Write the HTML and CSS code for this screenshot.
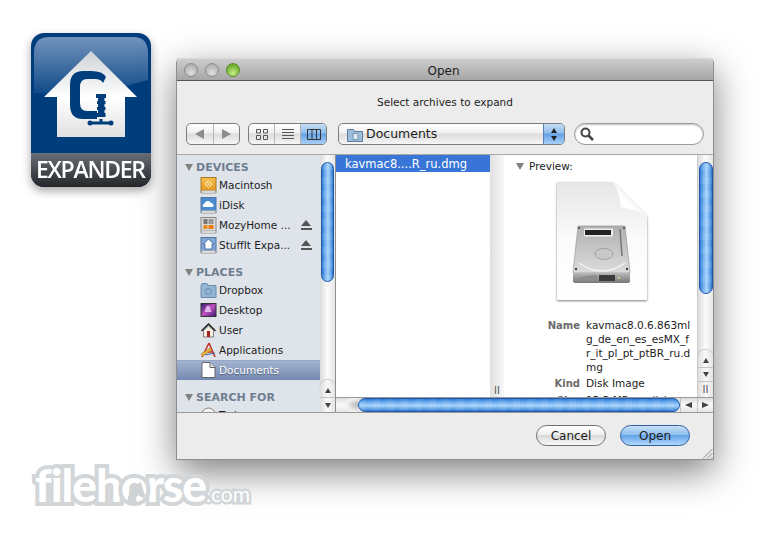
FILE: index.html
```html
<!DOCTYPE html>
<html lang="en">
<head>
    <meta charset="UTF-8">
    <meta name="viewport" content="width=device-width, initial-scale=1.0">
    <title>StuffIt Expander</title>
    <link rel="stylesheet" href="styles.css">
</head>
<body>
    <div class="desktop">
        <svg class="app-icon" width="120" height="154" viewBox="0 0 120 154">
            <defs>
                <linearGradient id="gloss" x1="0" y1="0" x2="0" y2="1">
                    <stop offset="0" stop-color="#7393bd"/>
                    <stop offset="1" stop-color="#0f4a88"/>
                </linearGradient>
                <linearGradient id="band" x1="0" y1="0" x2="0" y2="1">
                    <stop offset="0" stop-color="#6a7078"/>
                    <stop offset="1" stop-color="#24262a"/>
                </linearGradient>
                <linearGradient id="house" x1="0" y1="0" x2="0" y2="1">
                    <stop offset="0" stop-color="#cfd2d6"/>
                    <stop offset="0.55" stop-color="#ffffff"/>
                    <stop offset="1" stop-color="#e0e0e0"/>
                </linearGradient>
                <clipPath id="iconClip"><rect width="120" height="154" rx="13"/></clipPath>
            </defs>
            <g clip-path="url(#iconClip)">
                <rect width="120" height="154" fill="#003d7d"/>
                <path d="M3 20Q3 4 18 4H102Q117 4 117 20V47Q60 65 3 60Z" fill="url(#gloss)"/>
                <rect y="120" width="120" height="34" fill="url(#band)"/>
            </g>
            <path d="M60 18L106 64H94V104H26V64H13Z" fill="url(#house)"/>
            <path d="M75 44Q72 38 60 38H52Q39 38 39 52V72Q39 86 52 86H66V78H56Q49 78 49 70V54Q49 46 56 46H64Q70 46 72 50Z" fill="#003d7d"/>
            <path d="M65 61h10v4h-1.500v3h1v3h-1v3h1v3h-1v3h1v4H66v-4h1v-3h-1v-3h1v-3h-1v-3h1v-3h-2z" fill="#003d7d"/>
            <path d="M70 86V90M59 90H80" fill="none" stroke="#003d7d" stroke-width="3"/>
            <circle cx="59" cy="90" r="2.500" fill="#003d7d"/>
            <circle cx="80" cy="90" r="2.500" fill="#003d7d"/>
            <text class="app-icon-label" x="60" y="145" text-anchor="middle" textLength="110">EXPANDER</text>
        </svg>

        <div class="logo">fileh<span class="logo-o">o<svg class="logo-horse" width="18" height="22" viewBox="0 0 18 22"><path d="M14 0l1 4 3 9-1 3-3-1-3-3-2 3 1 7H0Q1 8 9 3z" fill="#cfd3d5"/></svg></span>rse<span class="logo-tld">.com</span></div>

        <div class="window">
            <div class="titlebar">
                <div class="lights">
                    <span class="light"></span>
                    <span class="light"></span>
                    <span class="light light-green"></span>
                </div>
                Open
            </div>
            <div class="prompt">Select archives to expand</div>

            <div class="toolbar">
                <div class="seg seg-nav">
                    <span class="seg-item"><i class="tri tri-left"></i></span>
                    <span class="seg-item"><i class="tri tri-right"></i></span>
                </div>
                <div class="seg seg-view">
                    <span class="seg-item">
                        <svg width="12" height="11" viewBox="0 0 12 11"><path d="M.5.5h4v3.500h-4zM7.500.5h4v3.500h-4zM.5 6.500h4v4h-4zM7.500 6.500h4v4h-4z" fill="none" stroke="#555"/></svg>
                    </span>
                    <span class="seg-item">
                        <svg width="12" height="11" viewBox="0 0 12 11"><path d="M0 .5h12M0 3.500h12M0 6.500h12M0 9.500h12" stroke="#555"/></svg>
                    </span>
                    <span class="seg-item seg-on">
                        <svg width="14" height="11" viewBox="0 0 14 11"><path d="M.5.5h13v10h-13zM5 .5v10M9.500 .5v10" fill="none" stroke="#333"/></svg>
                    </span>
                </div>
                <div class="popup">
                    <svg width="16" height="15" viewBox="0 0 16 15"><path d="M.5 2.500h6l1 2h8v10h-15z" fill="#9dbcd9" stroke="#5d7c9b"/><path d="M6 6.500h4l1 1v5h-5z" fill="#dce8f2" stroke="#5d7c9b" stroke-width=".7"/></svg>
                    <span class="popup-label">Documents</span>
                    <span class="stepper"><i class="tri tri-up"></i><i class="tri tri-down"></i></span>
                </div>
                <div class="search">
                    <svg width="14" height="14" viewBox="0 0 14 14"><circle cx="5.500" cy="5.500" r="4" fill="none" stroke="#444" stroke-width="2"/><path d="M8.500 8.500l4.500 4.500" stroke="#444" stroke-width="2.500"/></svg>
                </div>
            </div>

            <div class="browser">
                <div class="side">
                    <div class="sidebar">
                        <div class="side-head"><i class="disclose"></i>DEVICES</div>
                        <div class="side-row">
                            <svg class="side-icon" width="16" height="17" viewBox="0 0 16 17"><defs><linearGradient id="macDisk" x1="0" y1="0" x2="0" y2="1"><stop offset="0" stop-color="#f6c04e"/><stop offset="1" stop-color="#e2901c"/></linearGradient></defs><rect x=".5" y=".5" width="15" height="15" fill="url(#macDisk)" stroke="#a4782c"/><path d="M8 3.500l3.500 3.500-3.500 3.500-3.500-3.500z" fill="none" stroke="#fff3c8"/><circle cx="8" cy="7" r="1" fill="#fff3c8"/><rect x="1" y="13.500" width="14" height="3" fill="#d8d8d8" stroke="#999" stroke-width=".5"/></svg>
                            <span class="side-name">Macintosh</span>
                        </div>
                        <div class="side-row">
                            <svg class="side-icon" width="16" height="17" viewBox="0 0 16 17"><rect x=".5" y=".5" width="15" height="15" fill="#4a8bd6" stroke="#56749a"/><path d="M3 10a2 2 0 0 1 1-3.500a3.500 3.500 0 0 1 6.500-.5a2.500 2.500 0 0 1 2 4z" fill="#fff"/><rect x="1" y="13.500" width="14" height="3" fill="#d8d8d8" stroke="#999" stroke-width=".5"/></svg>
                            <span class="side-name">iDisk</span>
                        </div>
                        <div class="side-row">
                            <svg class="side-icon" width="16" height="17" viewBox="0 0 16 17"><rect x=".5" y=".5" width="15" height="15" fill="#d9d9d9" stroke="#888"/><path d="M3 2h4v5H3z" fill="#777"/><path d="M8 2h5v5H8z" fill="#999"/><path d="M3 8h4v4H3z" fill="#ee8a14"/><path d="M8 8h5v4H8z" fill="#ef7b10"/><rect x="1" y="13.500" width="14" height="3" fill="#d8d8d8" stroke="#999" stroke-width=".5"/></svg>
                            <span class="side-name">MozyHome ...</span>
                            <i class="eject"></i>
                        </div>
                        <div class="side-row">
                            <svg class="side-icon" width="16" height="17" viewBox="0 0 16 17"><rect x=".5" y=".5" width="15" height="15" fill="#7fa6d6" stroke="#56749a"/><path d="M8 2l5 5h-1.500v5h-7V7H3z" fill="#fff" stroke="#234f86" stroke-width=".7"/><rect x="1" y="13.500" width="14" height="3" fill="#d8d8d8" stroke="#999" stroke-width=".5"/></svg>
                            <span class="side-name">StuffIt Expa...</span>
                            <i class="eject"></i>
                        </div>
                        <div class="side-head side-head-next"><i class="disclose"></i>PLACES</div>
                        <div class="side-row">
                            <svg class="side-icon" width="16" height="15" viewBox="0 0 16 15"><path d="M.5 2.500l1-2h5l1 2h8v12H.5z" fill="#93b5d4" stroke="#6d8cab"/><circle cx="8" cy="8.500" r="3" fill="none" stroke="#6d8cab"/></svg>
                            <span class="side-name">Dropbox</span>
                        </div>
                        <div class="side-row">
                            <svg class="side-icon" width="16" height="14" viewBox="0 0 16 14"><defs><linearGradient id="deskBg" x1="0" y1="0" x2="1" y2="1"><stop offset="0" stop-color="#2b1a6e"/><stop offset=".5" stop-color="#c44fc0"/><stop offset="1" stop-color="#351a78"/></linearGradient></defs><rect x=".5" y=".5" width="15" height="13" fill="url(#deskBg)" stroke="#333"/><path d="M6 3l3 0 2 6H4z" fill="#f0d0f4" opacity=".8"/></svg>
                            <span class="side-name">Desktop</span>
                        </div>
                        <div class="side-row">
                            <svg class="side-icon" width="16" height="15" viewBox="0 0 16 15"><path d="M1 8l7-7 7 7" fill="none" stroke="#222" stroke-width="1.500"/><path d="M3 7.500L8 3l5 4.500V14H3z" fill="#f5efe4" stroke="#555" stroke-width=".7"/><rect x="6.500" y="8" width="3" height="6" fill="#a5231a"/></svg>
                            <span class="side-name">User</span>
                        </div>
                        <div class="side-row">
                            <svg class="side-icon" width="17" height="17" viewBox="0 0 17 17"><path d="M9 1L2 15M9 1l6 14M5 10h8" fill="none" stroke="#c3362b" stroke-width="1.600"/><path d="M1 12l9-6 1.500 2-9 6z" fill="#eeb62f" stroke="#8a6a1c" stroke-width=".5"/><path d="M5 13l10-2" stroke="#3a66a8" stroke-width="1"/></svg>
                            <span class="side-name">Applications</span>
                        </div>
                        <div class="side-row side-row-on">
                            <svg class="side-icon" width="14" height="16" viewBox="0 0 14 16"><path d="M.5.500h8l5 5v10H.5z" fill="#fff" stroke="#666"/><path d="M8.500.5v5h5" fill="#ddd" stroke="#666"/></svg>
                            <span class="side-name">Documents</span>
                        </div>
                        <div class="side-head side-head-next"><i class="disclose"></i>SEARCH FOR</div>
                        <div class="side-row">
                            <svg class="side-icon" width="16" height="16" viewBox="0 0 16 16"><circle cx="8" cy="8" r="7" fill="#f2f2f2" stroke="#888"/></svg>
                            <span class="side-name">Today</span>
                        </div>
                    </div>
                    <div class="vbar vbar-side">
                        <div class="vtrack"><div class="vthumb vthumb-side"></div></div>
                        <span class="vbtn vbtn-up"><i class="tri tri-up"></i></span>
                        <span class="vbtn"><i class="tri tri-down"></i></span>
                    </div>
                </div>

                <div class="main">
                    <div class="main-top">
                        <div class="column"><div class="file-row">kavmac8....R_ru.dmg</div></div>
                        <div class="resizer"><span class="resizer-mark">II</span></div>
                        <div class="preview">
                            <div class="preview-head"><i class="disclose"></i>Preview:</div>
                            <svg class="doc" width="94" height="122" viewBox="0 0 94 122">
                                <defs>
                                    <linearGradient id="page" x1="0" y1="0" x2="0" y2="1">
                                        <stop offset="0" stop-color="#e6e6e6"/>
                                        <stop offset=".5" stop-color="#fbfbfb"/>
                                        <stop offset="1" stop-color="#ffffff"/>
                                    </linearGradient>
                                    <linearGradient id="fold" x1="1" y1="0" x2="0" y2="1">
                                        <stop offset="0" stop-color="#c4c4c4"/>
                                        <stop offset=".6" stop-color="#ffffff"/>
                                        <stop offset="1" stop-color="#ffffff"/>
                                    </linearGradient>
                                    <linearGradient id="drive" x1="0" y1="0" x2="0" y2="1">
                                        <stop offset="0" stop-color="#b0b0b0"/>
                                        <stop offset="1" stop-color="#dcdcdc"/>
                                    </linearGradient>
                                    <linearGradient id="driveFront" x1="0" y1="0" x2="0" y2="1">
                                        <stop offset="0" stop-color="#b8b8b8"/>
                                        <stop offset="1" stop-color="#777777"/>
                                    </linearGradient>
                                    <filter id="docShadow" x="-10%" y="-10%" width="120%" height="120%"><feDropShadow dx="0" dy="1" stdDeviation="1.200" flood-opacity=".5"/></filter>
                                </defs>
                                <path d="M2 1H58L92 35V119H2Z" fill="url(#page)" filter="url(#docShadow)"/>
                                <path d="M58 1Q66 14 66 26Q80 24 92 35Z" fill="#fff"/>
                                <path d="M58 1L92 35Q78 28 66 26Q66 14 58 1Z" fill="url(#fold)"/>
                                <path d="M23 45H70L75 91V92H18V91Z" fill="url(#drive)" stroke="#8f8f8f" stroke-width=".6"/>
                                <path d="M18 92H75V100Q75 102 72 102H21Q18 102 18 100Z" fill="url(#driveFront)"/>
                                <rect x="29" y="47.500" width="29" height="8" fill="#eee"/>
                                <rect x="30" y="49" width="26" height="5" fill="#222"/>
                                <path d="M65 48L67 75" stroke="#777" stroke-width="1.500"/>
                                <path d="M24 82Q47 98 70 82" fill="none" stroke="#f4f4f4" stroke-width="1.500"/>
                                <ellipse cx="49" cy="73" rx="9" ry="5.500" fill="#c8c8c8" stroke="#8f8f8f" stroke-width=".7"/>
                                <path d="M44 94h16v6H44z" fill="#3b3b3b"/>
                                <path d="M20 100Q26 94 42 94V100Z" fill="#8c8c8c"/>
                                <circle cx="64" cy="97" r="1" fill="#e8d27a"/>
                                <circle cx="24" cy="47" r="1" fill="#444"/><circle cx="69" cy="47" r="1" fill="#444"/><circle cx="21" cy="88" r="1.200" fill="#444"/><circle cx="72" cy="88" r="1.200" fill="#444"/>
                            </svg>
                            <dl class="meta">
                                <dt>Name</dt>
                                <dd>kavmac8.0.6.863ml<br>g_de_en_es_esMX_f<br>r_it_pl_pt_ptBR_ru.d<br>mg</dd>
                                <dt class="meta-gap">Kind</dt>
                                <dd class="meta-gap">Disk Image</dd>
                                <dt class="meta-gap">Size</dt>
                                <dd class="meta-gap">13.3 MB on disk</dd>
                            </dl>
                        </div>
                        <div class="vbar vbar-main">
                            <div class="vtrack"><div class="vthumb vthumb-main"></div></div>
                            <span class="vbtn vbtn-up"><i class="tri tri-up"></i></span>
                            <span class="vbtn vbtn-down"><i class="tri tri-down"></i></span>
                            <span class="vbtn vbtn-mark">II</span>
                        </div>
                    </div>
                    <div class="hbar">
                        <span class="hcap"></span>
                        <div class="hthumb"></div>
                        <span class="hbtn"><i class="tri tri-left tri-small"></i></span>
                        <span class="hbtn"><i class="tri tri-right tri-small"></i></span>
                    </div>
                </div>
            </div>

            <div class="footer">
                <span class="btn">Cancel</span>
                <span class="btn btn-default">Open</span>
                <svg class="grip" width="11" height="11" viewBox="0 0 11 11"><path d="M1 10.500L10.500 1M5 10.500L10.500 5M9 10.500l1.500-1.500" stroke="#888"/></svg>
            </div>
        </div>
    </div>
</body>
</html>
```

FILE: styles.css
```css
* {
    box-sizing: border-box;
}
body {
    margin: 0;
    background: #fff;
    font-family: 'DejaVu Sans', sans-serif;
    font-size: 11px;
    color: #1c1c1c;
}
i {
    display: block;
}
.desktop {
    position: relative;
    width: 777px;
    height: 538px;
    overflow: hidden;
    background: #fff;
}

/* app icon + watermark */
.app-icon {
    position: absolute;
    left: 31px;
    top: 33px;
    filter: drop-shadow(0 4px 5px rgba(0,0,0,0.35));
}
.app-icon-label {
    font-family: 'Open Sans', sans-serif;
    font-weight: 600;
    font-size: 23px;
    fill: #fff;
}
.logo {
    position: absolute;
    left: 35px;
    top: 453px;
    z-index: 2;
    font-family: 'Lato', sans-serif;
    font-weight: 900;
    font-size: 46px;
    line-height: 64px;
    letter-spacing: -1px;
    color: #fff;
    -webkit-text-stroke: 8px #d2d6d8;
    paint-order: stroke fill;
}
.logo-o {
    position: relative;
}
.logo-horse {
    position: absolute;
    left: 6px;
    top: 25px;
}
.logo-tld {
    font-size: 21px;
    font-weight: 400;
    letter-spacing: 0;
    -webkit-text-stroke: 5px #d2d6d8;
}

/* window */
.window {
    position: absolute;
    left: 176px;
    top: 58px;
    width: 538px;
    height: 402px;
    display: flex;
    flex-direction: column;
    background: #ececec;
    border: 1px solid #8e8e8e;
    border-top: 0;
    border-radius: 5px 5px 0 0;
    box-shadow: 0 12px 36px rgba(0,0,0,0.5);
}
.titlebar {
    position: relative;
    height: 23px;
    flex: none;
    display: flex;
    align-items: center;
    justify-content: center;
    border-top: 1px solid #d8d8d8;
    border-bottom: 1px solid #565656;
    border-radius: 5px 5px 0 0;
    background: linear-gradient(#cdcdcd, #a6a6a6);
    font-size: 12px;
    padding: 2px 3px 0 0;
}
.lights {
    position: absolute;
    left: 7px;
    top: 4px;
    display: flex;
    gap: 7px;
}
.light {
    width: 14px;
    height: 14px;
    border-radius: 50%;
    border: 1px solid #8d8d8d;
    background: radial-gradient(circle at 50% 75%, #e0e0e0, #b0b0b0 75%);
}
.light-green {
    border-color: #5b8a2c;
    background: radial-gradient(circle at 50% 75%, #c8f08a, #6fae2e 70%);
}
.prompt {
    height: 42px;
    flex: none;
    display: flex;
    align-items: center;
    justify-content: center;
    font-size: 10.5px;
}

/* toolbar */
.toolbar {
    height: 22px;
    flex: none;
    display: flex;
    padding-left: 9px;
}
.seg {
    display: flex;
    border: 1px solid #7c7c7c;
    border-radius: 5px;
    overflow: hidden;
    background: linear-gradient(#fff, #f0f0f0 45%, #dcdcdc 50%, #f6f6f6);
}
.seg-nav {
    width: 54px;
}
.seg-view {
    width: 79px;
    margin-left: 8px;
}
.seg-item {
    flex: 1;
    display: flex;
    align-items: center;
    justify-content: center;
    border-left: 1px solid #b4b4b4;
}
.seg-item:first-child {
    border-left: 0;
}
.seg-on {
    background: linear-gradient(#c5dcf6, #8fbcec 45%, #62a0e6 50%, #a8d0f6);
}
.popup {
    width: 227px;
    margin-left: 11px;
    display: flex;
    align-items: center;
    padding-left: 8px;
    border: 1px solid #7c7c7c;
    border-radius: 5px;
    overflow: hidden;
    background: linear-gradient(#fff, #f0f0f0 45%, #dcdcdc 50%, #f6f6f6);
}
.popup-label {
    flex: 1;
    margin-left: 3px;
    padding-bottom: 2px;
    font-size: 12.5px;
}
.stepper {
    width: 21px;
    height: 100%;
    display: flex;
    flex-direction: column;
    align-items: center;
    justify-content: center;
    gap: 3px;
    border-left: 1px solid #5b7fb8;
    background: linear-gradient(#c5dcf6, #8fbcec 45%, #62a0e6 50%, #a8d0f6);
}
.search {
    width: 130px;
    margin-left: 9px;
    display: flex;
    align-items: center;
    padding-left: 5px;
    background: #fff;
    border: 1px solid #9a9a9a;
    border-radius: 11px;
    box-shadow: inset 0 1px 2px rgba(0,0,0,0.25);
}
.tri {
    width: 0;
    height: 0;
    border-style: solid;
    border-color: transparent;
}
.tri-left {
    border-width: 5px 9px 5px 0;
    border-right-color: #8c8c8c;
}
.tri-right {
    border-width: 5px 0 5px 9px;
    border-left-color: #8c8c8c;
}
.tri-left.tri-small {
    border-width: 3.500px 7px 3.500px 0;
    border-right-color: #444;
}
.tri-right.tri-small {
    border-width: 3.500px 0 3.500px 7px;
    border-left-color: #444;
}
.tri-up {
    border-width: 0 3.500px 5px;
    border-bottom-color: #222;
}
.tri-down {
    border-width: 5px 3.500px 0;
    border-top-color: #222;
}

/* file browser */
.browser {
    height: 259px;
    flex: none;
    margin-top: 9px;
    display: flex;
    border-top: 1px solid #a8a8a8;
    border-bottom: 1px solid #9a9a9a;
    overflow: hidden;
}
.side {
    width: 159px;
    flex: none;
    display: flex;
    border-right: 1px solid #8f8f8f;
}
.sidebar {
    flex: 1;
    min-width: 0;
    padding-top: 4px;
    background: #dfe4ea;
    overflow: hidden;
}
.side-head {
    height: 16px;
    display: flex;
    align-items: center;
    padding-left: 8px;
    font-weight: bold;
    font-size: 11px;
    color: #6f7d90;
}
.side-head-next {
    margin-top: 9px;
}
.disclose {
    width: 0;
    height: 0;
    margin-right: 3px;
    border-style: solid;
    border-width: 7px 4.500px 0;
    border-color: #818181 transparent transparent;
}
.side-row {
    height: 20px;
    display: flex;
    align-items: center;
    padding-left: 23px;
}
.side-row-on {
    background: linear-gradient(#a6b6d1, #7489b2);
    box-shadow: inset 0 1px 0 #95a7c6;
    color: #fff;
    text-shadow: 0 1px 1px rgba(0,0,0,0.4);
}
.side-icon {
    flex: none;
    margin-right: 2px;
    width: 17px;
}
.side-name {
    white-space: nowrap;
    font-size: 10.500px;
}
.eject {
    flex: none;
    margin-left: auto;
    margin-right: 8px;
    width: 11px;
    height: 10px;
    background: linear-gradient(#555, #555) bottom / 11px 2px no-repeat;
    position: relative;
}
.eject::before {
    content: '';
    position: absolute;
    left: 0;
    top: 0;
    border-style: solid;
    border-width: 0 5.500px 6px;
    border-color: transparent transparent #555;
}

/* scrollbars */
.vbar {
    flex: none;
    display: flex;
    flex-direction: column;
    background: linear-gradient(to right, #dadada, #f8f8f8 50%, #e2e2e2);
}
.vbar-side {
    width: 15px;
}
.vbar-main {
    width: 16px;
    border-left: 1px solid #ccc;
}
.vtrack {
    flex: 1;
    padding: 7px 1px 0;
    min-height: 0;
    background: linear-gradient(to right, #dcdcdc, #fbfbfb 50%, #e6e6e6);
}
.vthumb,
.hthumb {
    border: 1px solid #1d59ad;
    background:
        repeating-linear-gradient(to bottom, rgba(255,255,255,0.08) 0 7px, rgba(255,255,255,0) 7px 14px),
        linear-gradient(to right, #2f77d0, #74b3f2 30%, #a7d2fa 55%, #5a9fe8 85%, #2d6fc6);
}
.vthumb {
    border-radius: 7px;
}
.vthumb-side {
    height: 120px;
}
.vthumb-main {
    width: 14px;
    height: 132px;
}
.vbtn {
    height: 15px;
    flex: none;
    display: flex;
    align-items: center;
    justify-content: center;
    border-top: 1px solid #c4c4c4;
    background: linear-gradient(to right, #dedede, #f8f8f8 50%, #e4e4e4);
}
.vbtn-up {
    height: 17px;
    padding-top: 3px;
    border-top: 0;
    border-radius: 7px 7px 0 0;
    box-shadow: 0 -1px 1px rgba(0,0,0,0.18);
}
.vbtn-down {
    height: 14px;
}
.vbtn .tri-up,
.vbtn .tri-down {
    border-bottom-color: #444;
    border-top-color: #444;
}
.vbtn-mark {
    height: 16px;
}
.vbtn-mark,
.resizer-mark {
    font-size: 10px;
    color: #555;
}
.main {
    flex: 1;
    min-width: 0;
    display: flex;
    flex-direction: column;
}
.main-top {
    flex: 1;
    min-height: 0;
    display: flex;
}
.column {
    width: 154px;
    flex: none;
    background: #fff;
}
.file-row {
    height: 17px;
    padding-left: 9px;
    background: #3875d7;
    color: #fff;
    font-size: 11.500px;
    line-height: 18px;
}
.resizer {
    width: 14px;
    flex: none;
    display: flex;
    flex-direction: column;
    justify-content: flex-end;
    align-items: center;
    padding-bottom: 1px;
    background: linear-gradient(to right, #e0e0e0, #f8f8f8);
}
.preview {
    width: 193px;
    flex: none;
    overflow: hidden;
    background: #fff;
}
.preview-head {
    height: 24px;
    display: flex;
    align-items: center;
    padding: 0 0 2px 12px;
    font-size: 10.500px;
}
.preview-head .disclose {
    margin-right: 5px;
}
.doc {
    display: block;
    margin: 2px 0 0 51px;
}
.meta {
    margin: 15px 0 0;
    display: grid;
    grid-template-columns: 76px 110px;
    column-gap: 6px;
    align-items: baseline;
    line-height: 14px;
    font-size: 10.500px;
}
.meta dt {
    text-align: right;
    font-weight: bold;
    font-size: 10px;
    color: #6a6a6a;
}
.meta dd {
    margin: 0;
    white-space: nowrap;
}
.meta .meta-gap {
    margin-top: 2px;
}
.hbar {
    height: 15px;
    flex: none;
    display: flex;
    border-top: 1px solid #999;
    background: linear-gradient(#dcdcdc, #fafafa 50%, #e4e4e4);
}
.hcap {
    width: 22px;
    flex: none;
    background: radial-gradient(ellipse 15px 9px at 100% 50%, #b4b4b4, #f2f2f2 75%, rgba(255,255,255,0) 100%);
}
.hthumb {
    width: 322px;
    flex: none;
    border-radius: 7px;
    background:
        repeating-linear-gradient(to right, rgba(255,255,255,0.08) 0 7px, rgba(255,255,255,0) 7px 14px),
        linear-gradient(#2f77d0, #74b3f2 30%, #a7d2fa 55%, #5a9fe8 85%, #2d6fc6);
}
.hbtn {
    flex: 1;
    display: flex;
    align-items: center;
    justify-content: center;
    border-left: 1px solid #c4c4c4;
}

/* buttons */
.footer {
    position: relative;
    flex: 1;
    display: flex;
    justify-content: flex-end;
    align-items: flex-start;
    gap: 14px;
    padding: 12px 23px 0 0;
}
.btn {
    width: 70px;
    height: 21px;
    display: flex;
    align-items: center;
    justify-content: center;
    border: 1px solid #6f6f6f;
    border-radius: 11px;
    background: linear-gradient(#fff, #efefef 45%, #dadada 50%, #f8f8f8);
    font-size: 12px;
}
.btn-default {
    border-color: #33609f;
    background: linear-gradient(#c9e0f8, #8fbfee 45%, #63a3e8 50%, #b0d8fa);
}
.grip {
    position: absolute;
    right: 0;
    bottom: 0;
}
```
